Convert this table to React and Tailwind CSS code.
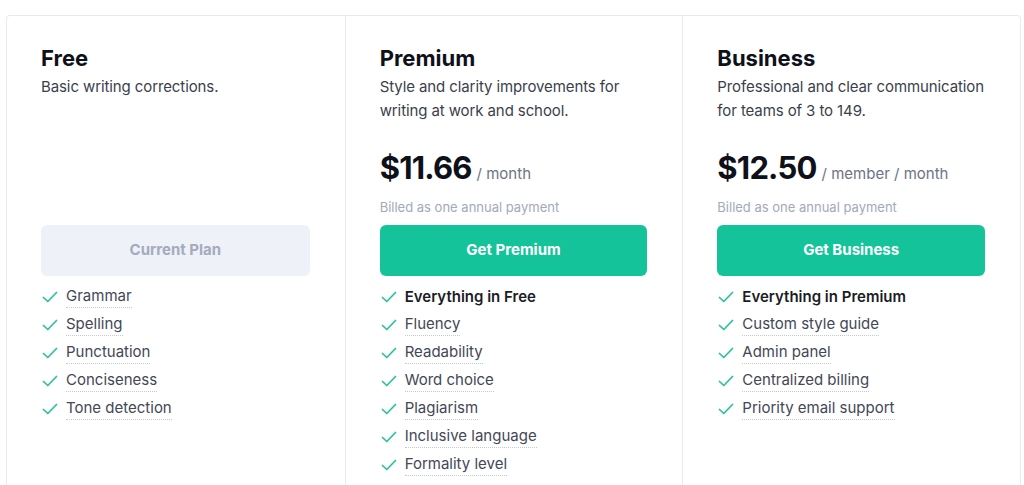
const plans = [
  {
    name: 'Free',
    description: 'Basic writing corrections.',
    price: null,
    cta: 'Current Plan',
    current: true,
    features: [
      { label: 'Grammar' },
      { label: 'Spelling' },
      { label: 'Punctuation' },
      { label: 'Conciseness' },
      { label: 'Tone detection' },
    ],
  },
  {
    name: 'Premium',
    description: 'Style and clarity improvements for writing at work and school.',
    price: '$11.66',
    unit: '/ month',
    cta: 'Get Premium',
    features: [
      { label: 'Everything in Free', bold: true },
      { label: 'Fluency' },
      { label: 'Readability' },
      { label: 'Word choice' },
      { label: 'Plagiarism' },
      { label: 'Inclusive language' },
      { label: 'Formality level' },
    ],
  },
  {
    name: 'Business',
    description: 'Professional and clear communication for teams of 3 to 149.',
    price: '$12.50',
    unit: '/ member / month',
    cta: 'Get Business',
    features: [
      { label: 'Everything in Premium', bold: true },
      { label: 'Custom style guide' },
      { label: 'Admin panel' },
      { label: 'Centralized billing' },
      { label: 'Priority email support' },
    ],
  },
];

// thin green tick used in the feature lists
const Check = () => (
  <svg width="18" height="18" viewBox="0 0 18 18" fill="none" className="shrink-0">
    <path d="M2.5 9.5 L6.8 13.5 L15.5 4.5" stroke="#2bc29b" strokeWidth="1.7" strokeLinecap="round" strokeLinejoin="round" />
  </svg>
);

const PlanColumn = ({ plan, first }) => (
  <div className={`flex flex-col pl-[34px] pr-[35px] pt-[28px] pb-[16px] ${first ? '' : 'border-l border-[#e8eaee]'}`}>
    <div className="flex h-[173px] flex-col">
      <h2 className="text-[22px] font-bold leading-[28px] text-[#0e101a]">{plan.name}</h2>
      <p className="mt-[3px] text-[15px] leading-[24px] tracking-[-0.1px] text-[#3b3f4c]">{plan.description}</p>
      {plan.price && (
        <div className="mt-auto">
          <div className="flex items-baseline gap-[5px]">
            <span className="text-[31px] font-bold leading-[40px] tracking-[-0.8px] text-[#0e101a]">{plan.price}</span>
            <span className="text-[15px] text-[#6d7385]">{plan.unit}</span>
          </div>
          <p className="mt-[9px] text-[13px] leading-[20px] text-[#a3a9b8]">Billed as one annual payment</p>
        </div>
      )}
    </div>

    <button
      className={`mt-[8px] h-[51px] w-full rounded-[6px] text-[15px] font-bold ${
        plan.current ? 'bg-[#eef1f8] text-[#a4abbd]' : 'bg-[#15c39a] text-white'
      }`}
    >
      {plan.cta}
    </button>

    <ul className="mt-[7px] flex flex-col">
      {plan.features.map((f) => (
        <li key={f.label} className="flex h-[28px] items-center gap-[7px]">
          <Check />
          <span
            className={`text-[15px] leading-[20px] ${
              f.bold
                ? 'font-semibold text-[#1b1d26]'
                : 'border-b border-dotted border-[#c4c8d2] pb-[1px] text-[#434756]'
            }`}
          >
            {f.label}
          </span>
        </li>
      ))}
    </ul>
  </div>
);

export default function App() {
  return (
    <div className="min-h-[485px] bg-white pl-[6px] pr-[3px] pt-[15px] font-['Inter','Noto_Sans',sans-serif]">
      <div className="grid grid-cols-3 rounded-t-[4px] border border-b-0 border-[#e8eaee]">
        {plans.map((plan, i) => (
          <PlanColumn key={plan.name} plan={plan} first={i === 0} />
        ))}
      </div>
    </div>
  );
}
